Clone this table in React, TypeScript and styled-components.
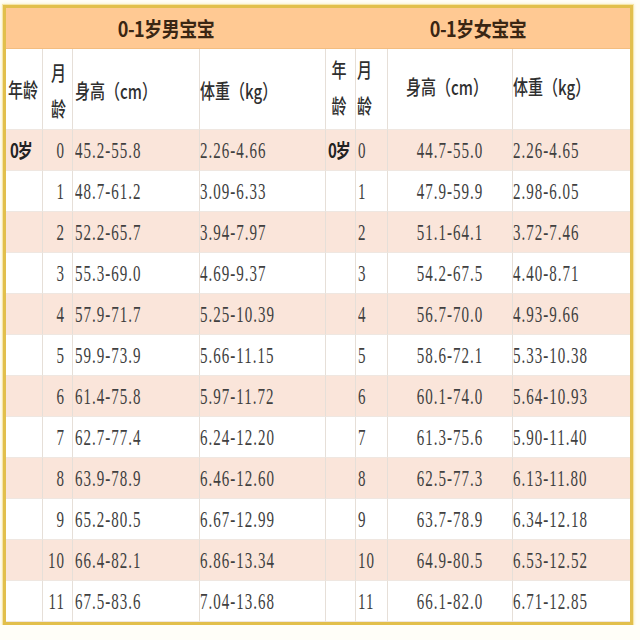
import React from "react";
import styled, { createGlobalStyle } from "styled-components";

const Global = createGlobalStyle`
  html, body { margin: 0; padding: 0; background: #fffef8; }
  body { font-family: "Noto Sans CJK SC", "Noto Sans", sans-serif; }
`;

const Frame = styled.div`
  margin: 5px 0 0 3px;
  width: 624px;
  border: 3px solid #e2bf4c;
  box-shadow: 0 0 0 1px #f5e6a8, 0 0 3px 1px #f7ecc0;
  display: flex;
  background: #ffffff;
`;

const Half = styled.div<{ $cols: string }>`
  display: grid;
  grid-template-columns: ${(p) => p.$cols};
  grid-template-rows: 41px 81px repeat(12, 41px);
`;

const Title = styled.div`
  grid-column: 1 / -1;
  background: #ffc993;
  border-bottom: 1px solid #f3bd80;
  display: flex;
  align-items: center;
  justify-content: center;
`;

const TitleText = styled.span`
  display: inline-block;
  font-family: "Noto Sans CJK SC", sans-serif;
  font-weight: 700;
  font-size: 18px;
  color: #3a2613;
  letter-spacing: -0.5px;
  transform: scaleY(1.15);
`;

type Align = "flex-start" | "center" | "flex-end";

const Cell = styled.div<{ $align: Align; $pl?: number; $pr?: number; $alt?: boolean; $last?: boolean; $dy?: number }>`
  display: flex;
  flex-direction: column;
  justify-content: center;
  align-items: ${(p) => p.$align};
  padding-left: ${(p) => p.$pl ?? 0}px;
  padding-right: ${(p) => p.$pr ?? 0}px;
  padding-top: ${(p) => Math.max(0, p.$dy ?? 0)}px;
  padding-bottom: ${(p) => Math.max(0, -(p.$dy ?? 0))}px;
  background: ${(p) => (p.$alt ? "#fae5da" : "#ffffff")};
  border-right: ${(p) => (p.$last ? "none" : "1px solid #e6dfd8")};
  border-bottom: 1px solid #efe7e1;
  box-sizing: border-box;
  overflow: visible;
  white-space: nowrap;
`;

const HeadText = styled.span`
  display: inline-block;
  font-family: "Noto Sans CJK SC", sans-serif;
  font-weight: 500;
  font-size: 15px;
  line-height: 20px;
  color: #2f2f2f;
  transform: scaleY(1.35);
`;

const Stack = styled.div<{ $gap: number }>`
  display: flex;
  flex-direction: column;
  align-items: center;
  gap: ${(p) => p.$gap}px;
`;

const Num = styled.span`
  display: inline-block;
  font-family: "Liberation Serif", "Times New Roman", serif;
  font-size: 15px;
  line-height: 16px;
  letter-spacing: 1px;
  color: #404040;
  transform: scaleY(1.6);
`;

const Year = styled.span`
  display: inline-block;
  font-family: "Noto Sans CJK SC", sans-serif;
  font-weight: 700;
  font-size: 15px;
  line-height: 18px;
  letter-spacing: -1px;
  color: #222;
  transform: scaleY(1.3);
`;

const boys = [
  ["45.2-55.8", "2.26-4.66"],
  ["48.7-61.2", "3.09-6.33"],
  ["52.2-65.7", "3.94-7.97"],
  ["55.3-69.0", "4.69-9.37"],
  ["57.9-71.7", "5.25-10.39"],
  ["59.9-73.9", "5.66-11.15"],
  ["61.4-75.8", "5.97-11.72"],
  ["62.7-77.4", "6.24-12.20"],
  ["63.9-78.9", "6.46-12.60"],
  ["65.2-80.5", "6.67-12.99"],
  ["66.4-82.1", "6.86-13.34"],
  ["67.5-83.6", "7.04-13.68"],
];

const girls = [
  ["44.7-55.0", "2.26-4.65"],
  ["47.9-59.9", "2.98-6.05"],
  ["51.1-64.1", "3.72-7.46"],
  ["54.2-67.5", "4.40-8.71"],
  ["56.7-70.0", "4.93-9.66"],
  ["58.6-72.1", "5.33-10.38"],
  ["60.1-74.0", "5.64-10.93"],
  ["61.3-75.6", "5.90-11.40"],
  ["62.5-77.3", "6.13-11.80"],
  ["63.7-78.9", "6.34-12.18"],
  ["64.9-80.5", "6.53-12.52"],
  ["66.1-82.0", "6.71-12.85"],
];

function BoysTable() {
  return (
    <Half $cols="37px 30px 127px 126px">
      <Title>
        <TitleText>0-1岁男宝宝</TitleText>
      </Title>
      <Cell $align="flex-start" $pl={2} $dy={2}>
        <HeadText>年龄</HeadText>
      </Cell>
      <Cell $align="center" $pl={2} $dy={4}>
        <Stack $gap={16}>
          <HeadText>月</HeadText>
          <HeadText>龄</HeadText>
        </Stack>
      </Cell>
      <Cell $align="flex-start" $pl={2} $dy={4}>
        <HeadText>身高（cm）</HeadText>
      </Cell>
      <Cell $align="flex-start" $pl={0} $dy={4}>
        <HeadText>体重（kg）</HeadText>
      </Cell>
      {boys.map((r, i) => (
        <React.Fragment key={i}>
          <Cell $align="flex-start" $pl={4} $alt={i % 2 === 0}>
            {i === 0 ? <Year>0岁</Year> : null}
          </Cell>
          <Cell $align="flex-end" $pr={7} $alt={i % 2 === 0}>
            <Num>{i}</Num>
          </Cell>
          <Cell $align="flex-start" $pl={2} $alt={i % 2 === 0}>
            <Num>{r[0]}</Num>
          </Cell>
          <Cell $align="flex-start" $pl={0} $alt={i % 2 === 0}>
            <Num>{r[1]}</Num>
          </Cell>
        </React.Fragment>
      ))}
    </Half>
  );
}

function GirlsTable() {
  return (
    <Half $cols="30px 32px 125px 117px">
      <Title>
        <TitleText>0-1岁女宝宝</TitleText>
      </Title>
      <Cell $align="center" $pr={3} $dy={-2}>
        <Stack $gap={16}>
          <HeadText>年</HeadText>
          <HeadText>龄</HeadText>
        </Stack>
      </Cell>
      <Cell $align="flex-start" $pl={1} $dy={-2}>
        <Stack $gap={16}>
          <HeadText>月</HeadText>
          <HeadText>龄</HeadText>
        </Stack>
      </Cell>
      <Cell $align="center" $pr={6} $dy={-4}>
        <HeadText>身高（cm）</HeadText>
      </Cell>
      <Cell $align="flex-start" $pl={0} $dy={-4} $last>
        <HeadText>体重（kg）</HeadText>
      </Cell>
      {girls.map((r, i) => (
        <React.Fragment key={i}>
          <Cell $align="flex-start" $pl={2} $alt={i % 2 === 0}>
            {i === 0 ? <Year>0岁</Year> : null}
          </Cell>
          <Cell $align="flex-start" $pl={2} $alt={i % 2 === 0}>
            <Num>{i}</Num>
          </Cell>
          <Cell $align="center" $alt={i % 2 === 0}>
            <Num>{r[0]}</Num>
          </Cell>
          <Cell $align="flex-start" $pl={0} $alt={i % 2 === 0} $last>
            <Num>{r[1]}</Num>
          </Cell>
        </React.Fragment>
      ))}
    </Half>
  );
}

export default function App() {
  return (
    <>
      <Global />
      <Frame>
        <BoysTable />
        <GirlsTable />
      </Frame>
    </>
  );
}
